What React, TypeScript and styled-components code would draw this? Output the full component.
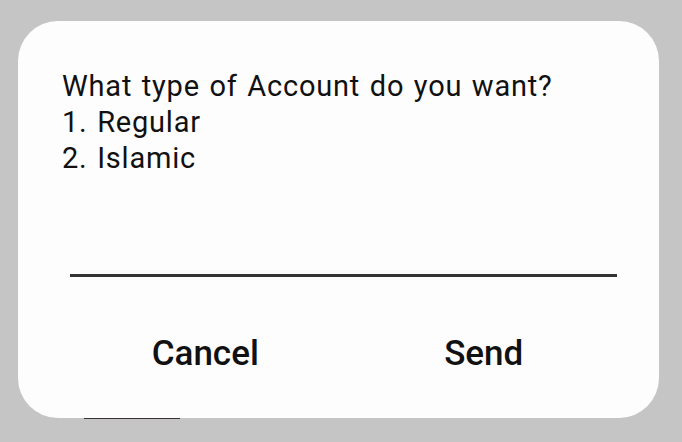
import { createGlobalStyle, styled } from "styled-components";

const GlobalStyle = createGlobalStyle`
    html, body {
        margin: 0;
        padding: 0;
    }
    body {
        background: #c6c5c6;
        font-family: Roboto, "Noto Sans", "Liberation Sans", sans-serif;
    }
`;

const Screen = styled.div`
    height: 442px;
    padding: 21px 0 0 18px;
    box-sizing: border-box;
    overflow: hidden;
`;

const Dialog = styled.div`
    position: relative;
    z-index: 1;
    width: 641px;
    height: 397px;
    background: #fefdfe;
    border-radius: 40px;
    box-sizing: border-box;
    padding: 47px 42px 0 0;
`;

const Message = styled.div`
    padding-left: 44px;
    font-size: 29px;
    letter-spacing: 0.8px;
    word-spacing: 1.6px;
    line-height: 36px;
    color: #111;
`;

const Field = styled.div`
    height: 98px;
    margin-left: 52px;
    border-bottom: 3px solid #333;
`;

const Actions = styled.div`
    display: grid;
    grid-template-columns: 1fr 1fr;
    margin: 0 -6px 0 48px;
    padding-top: 57px;
`;

const ActionButton = styled.button`
    background: none;
    border: none;
    padding: 0;
    font-family: inherit;
    font-size: 35px;
    line-height: 40px;
    font-weight: 500;
    color: #111;
    text-align: center;
`;

const Peek = styled.div`
    width: 96px;
    height: 2px;
    margin: -1px 0 0 66px;
    background: #3a3436;
`;

export default function App() {
    return (
        <Screen>
            <GlobalStyle />
            <Dialog>
                <Message>
                    What type of Account do you want?
                    <br />
                    1. Regular
                    <br />
                    2. Islamic
                </Message>
                <Field />
                <Actions>
                    <ActionButton>Cancel</ActionButton>
                    <ActionButton>Send</ActionButton>
                </Actions>
            </Dialog>
            <Peek />
        </Screen>
    );
}
